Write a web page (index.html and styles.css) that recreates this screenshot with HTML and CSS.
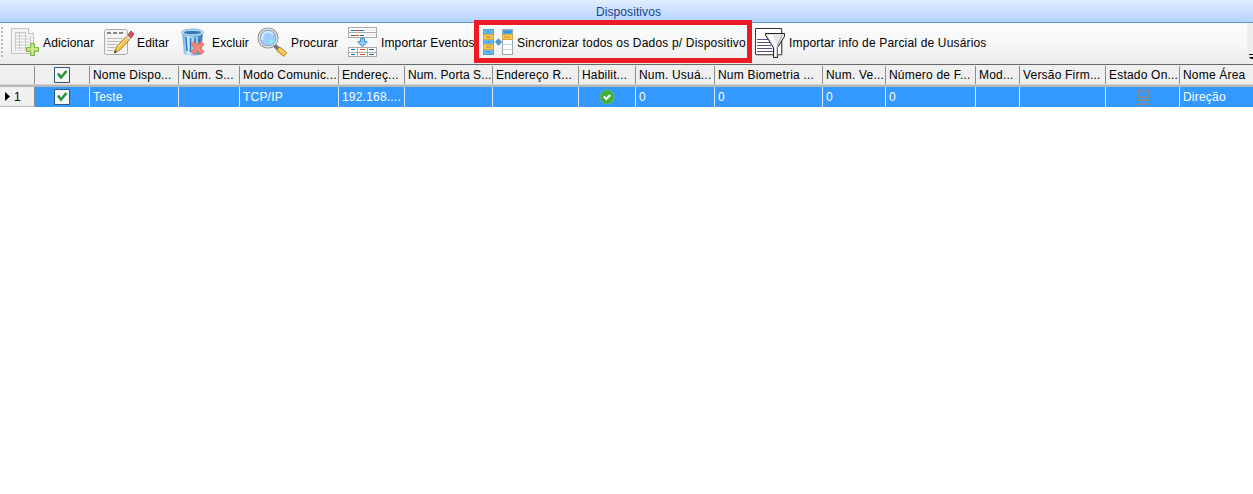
FILE: index.html
```html
<!DOCTYPE html>
<html lang="pt-BR">
<head>
<meta charset="utf-8">
<title>Dispositivos</title>
<link rel="stylesheet" href="styles.css">
</head>
<body>
<header class="title">Dispositivos</header>
<nav class="toolbar">
  <svg class="grip" width="9" height="41"><path d="M2 4v30" stroke="#bbb" stroke-width="2" stroke-dasharray="2 2"/></svg>
  <div class="tool add"><svg class="icon" viewBox="0 0 32 32">
    <path d="M2.500 1.500h17l5 5v20h-22z" fill="#f4f4f4" stroke="#c3c3c3"/><path d="M19.500 1.500v5h5" fill="#fff" stroke="#bbb"/>
    <path d="M6 5h11v4h5v15H6z" fill="#c9c9c9"/><path d="M7 7.500h3M11 7.500h5M7 10.500h3M11 10.500h5M17 10.500h4M7 13.500h3M11 13.500h5M17 13.500h4M7 16.500h3M11 16.500h5M17 16.500h4M7 19.500h3M11 19.500h5M17 19.500h4M7 22.500h3M11 22.500h5" stroke="#fafafa" stroke-width="2"/>
    <path d="M21.500 16.500h4v4h4v4h-4v4h-4v-4h-4v-4h4z" fill="#b9dd70" stroke="#83b54b"/><path d="M23.500 18v9M19 22h9" stroke="#d4ed9c"/></svg><span>Adicionar</span></div>
  <div class="tool edit"><svg class="icon" viewBox="0 0 32 32">
    <rect x="1.500" y="2.500" width="23" height="25" rx="2" fill="#f3f3f3" stroke="#aaa"/><path d="M4 6h4m2 0h4m2 0h4" stroke="#888" stroke-width="2"/><path d="M4 11.500h16M4 14.500h14M4 17.500h10M4 20.500h8M4 23.500h6" stroke="#bbb"/>
    <path d="M11 26l3-7L26 7l3 3-12 13z" fill="#f7c651" stroke="#b37b28"/><path d="M15 20L26 9" stroke="#ffe59c"/><path d="M25 8l3-4 3 3-3 4z" fill="#cf5550" stroke="#a64848"/><path d="M24 9l3 3" stroke="#ccd3dc" stroke-width="2"/><path d="M11 26l1-3 2 2z" fill="#444"/></svg><span>Editar</span></div>
  <div class="tool delete"><svg class="icon" viewBox="0 0 32 32">
    <defs><linearGradient id="bin"><stop stop-color="#5ea7e0"/><stop offset=".3" stop-color="#d4edff"/><stop offset=".6" stop-color="#7db7e8"/><stop offset="1" stop-color="#347abd"/></linearGradient></defs>
    <path d="M4 5l2 22c3 2 14 2 17 0l2-22z" fill="url(#bin)"/><path d="M8 10l1 14M12.500 11v14M17 11v14M21.500 10l-1 13" stroke="#2975b7" stroke-width="1.400"/><path d="M10.500 11v14M15 11v14M19 10v14" stroke="#cfeaff"/>
    <ellipse cx="14.500" cy="5.500" rx="11" ry="3.500" fill="#b9e0f7" stroke="#83b4d8"/><ellipse cx="14.500" cy="5.500" rx="8.500" ry="1.800" fill="#3478b4"/>
    <path d="M16 14.500l3.500 3.500 3.500-3.500 3 3-3.500 3.500 3.500 3.500-3 3-3.500-3.500-3.500 3.500-3-3 3.500-3.500-3.500-3.500z" fill="#ef8a7b" stroke="#d5665f"/></svg><span>Excluir</span></div>
  <div class="tool search"><svg class="icon" viewBox="0 0 32 32">
    <path d="M17 18l9 8" stroke="#777" stroke-width="4"/><path d="M21 21.500l7.500 6.500" stroke="#b98336" stroke-width="5.500"/><path d="M21.500 22l6.500 5.500" stroke="#ffc53e" stroke-width="3.500"/><path d="M22 21l6 5" stroke="#ffe69a"/>
    <circle cx="11" cy="11" r="9" fill="#9fccff" stroke="#858b92" stroke-width="3"/><circle cx="11" cy="11" r="8.900" fill="none" stroke="#e0e4e9" stroke-width="1.500"/><path d="M5 13c0-9 7-10 11-6" fill="none" stroke="#d1e9ff" stroke-width="2"/><circle cx="14.500" cy="14.500" r="2" fill="#7df0ff"/></svg><span>Procurar</span></div>
  <div class="tool events"><svg class="icon" viewBox="0 0 32 32" shape-rendering="crispEdges">
    <path d="M1 0h29v11H1zM1 20h29v10H1z" fill="#aaa"/><path d="M2 1h27v4H2zM2 6h27v4H2zM2 21h8v4H2zM11 21h9v4h-9zM21 21h8v4h-8zM2 26h8v3H2zM11 26h9v3h-9zM21 26h8v3h-8z" fill="#fff"/><path d="M18 2h10v2H18zM19 7h9v2h-9z" fill="#eee"/>
    <path d="M4 3h4v1H4zM13 3h4v1h-4zM4 8h3v1H4zM13 8h4v1h-4zM4 22h4v1H4zM22 22h5v1h-5zM4 27h4v1H4zM22 27h5v1h-5z" fill="#2469a8"/><path d="M8 3h5v1H8zM7 8h5v1H7zM13 22h5v1h-5zM13 27h5v1h-5z" fill="#e1441c"/>
    <path d="M13.500 11.500h4v3h2.500v1l-4.500 4-4.500-4v-1h2.500z" fill="#8fcbf6" stroke="#408bd0" shape-rendering="auto"/></svg><span>Importar Eventos</span></div>
  <div class="tool sync"><svg class="icon" viewBox="0 0 32 32">
    <path d="M0 2h11v26H0z" fill="#4c9fce"/><path d="M1 3h9v4H1zM1 13h9v4H1zM1 23h9v4H1z" fill="#62bff5"/><path d="M0 7h11v6H0zM0 17h11v6H0z" fill="#d5a245"/><path d="M1 8h9v4H1zM1 18h9v4H1z" fill="#ffc642"/>
    <path d="M3 4.500l1 1 1-1 1 1 1-1 1 1M3 9.500l1 1 1-1 1 1 1-1 1 1M3 14.500l1 1 1-1 1 1 1-1 1 1M3 19.500l1 1 1-1 1 1 1-1 1 1M3 24.500l1 1 1-1 1 1 1-1 1 1" fill="none" stroke="#356c96" stroke-width=".7"/>
    <path d="M19 2h11v26H19z" fill="#9ba6ae"/><path d="M20 3h9v4h-9z" fill="#48aef6"/><path d="M19 7h11v6H19z" fill="#d5a245"/><path d="M20 8h9v4h-9z" fill="#ffc642"/><path d="M20 13h9v4h-9zM20 18h9v4h-9zM20 23h9v4h-9z" fill="#fff"/><path d="M20 17h9v1h-9zM20 22h9v1h-9z" fill="#c3ded9"/><path d="M21 5h7" stroke="#2576c5"/><path d="M21 9.500l2 1 1-1 2 1 1-1" fill="none" stroke="#a77d24" stroke-width=".8"/>
    <path d="M15.500 11.500l3.500 3.500-3.500 3.500-3.500-3.500z" fill="#4f99d0" stroke="#7db7df"/></svg><span>Sincronizar todos os Dados p/ Dispositivo</span></div>
  <div class="tool partial"><svg class="icon" viewBox="0 0 32 32">
    <path d="M.5 1.500h26v26H.5z" fill="#fff" stroke="#333"/><path d="M1 28h26V3" fill="none" stroke="#888"/><path d="M2 12h12v1H2zM2 15h13v1H2zM2 18h14v1H2zM2 21h15v1H2zM2 24h16v1H2z" fill="#55508a"/>
    <path d="M10.500 6.500h19v3l-7 11v10h-4V21l-8-13z" fill="#e4e4e4" stroke="#222"/><path d="M13 8h5l4 12v9h-2V20z" fill="#fff"/><path d="M27 8l-5 12v9" fill="none" stroke="#aaa"/></svg><span>Importar info de Parcial de Uusários</span></div>
  <div class="overflow"><svg width="6" height="8"><path d="M2 1h4v1H2zM2 4h4v2H4z" fill="#111"/></svg></div>
</nav>
<main class="grid">
  <div class="row head">
    <div></div><div class="mark"><svg class="check" width="16" height="16" viewBox="0 0 16 16"><path d="M.5.500h15v15H.5z" fill="#f5f7f6" stroke="#30577d"/><path d="M4 6.500l3 4 5.500-6.500" fill="none" stroke="#27923a" stroke-width="2.600"/></svg></div>
    <div>Nome Dispo...</div><div>Núm. S...</div><div>Modo Comunic...</div><div>Endereç...</div><div class="tight">Num. Porta S...</div><div>Endereço R...</div><div>Habilit...</div><div>Num. Usuá...</div><div>Num Biometria ...</div><div>Num. Ve...</div><div>Número de F...</div><div>Mod...</div><div>Versão Firm...</div><div>Estado On...</div><div>Nome Área</div>
  </div>
  <div class="row data">
    <div class="index"><svg width="6" height="10"><path d="M0 0l5 4.500L0 9z"/></svg><span>1</span></div><div class="mark"><svg class="check" width="16" height="16" viewBox="0 0 16 16"><path d="M.5.500h15v15H.5z" fill="#f5f7f6" stroke="#30577d"/><path d="M4 6.500l3 4 5.500-6.500" fill="none" stroke="#27923a" stroke-width="2.600"/></svg></div>
    <div>Teste</div><div></div><div>TCP/IP</div><div>192.168....</div><div></div><div></div>
    <div class="mark"><svg width="16" height="16"><circle cx="8" cy="8" r="7.200" fill="#45ae3a" stroke="#75c4a0" stroke-width=".6"/><path d="M4.800 7.500l2.500 2.500 4-4" fill="none" stroke="#fff" stroke-width="2.200"/></svg></div>
    <div>0</div><div>0</div><div>0</div><div>0</div><div></div><div></div>
    <div class="mark"><svg width="16" height="16"><path d="M3 1h11v8H3zM4.500 2.500v5h8v-5z" fill="#858b92" fill-rule="evenodd"/><path d="M3 10h11v2H3zM8 12h1v2h4v2H4v-2h4zM1 15h14v1H1z" fill="#858b92"/></svg></div><div>Direção</div>
  </div>
</main>
</body>
</html>
```
FILE: styles.css
```css
* { box-sizing: border-box; }
body { margin: 0; height: 494px; overflow: hidden; background: #fff; color: #000; font: 12px "Liberation Sans", Arial, sans-serif; }
svg { display: block; flex: none; }
.title { height: 23px; padding-left: 4px; line-height: 24px; text-align: center; color: #15428b; letter-spacing: .1px; background: linear-gradient(#e2edff, #b4d3ff); border-bottom: 1px solid #6593cf; }
.toolbar { display: flex; height: 42px; background: linear-gradient(#fcfcfc, #f7f7f7 50%, #ebebeb); border-bottom: 1px solid #686868; }
.grip { width: 9px; }
.tool { display: flex; flex: none; height: 41px; padding-top: 4px; white-space: nowrap; letter-spacing: .14px; }
.icon { width: 32px; height: 32px; margin-right: 2px; }
.tool span { line-height: 32px; }
.add { width: 94px; }
.edit { width: 75px; }
.delete { width: 79px; }
.search { width: 90px; }
.events { width: 127px; }
.sync { width: 278px; height: 43px; margin-top: -3px; padding: 2px 0 0 4px; border: 5px solid #ed1c24; letter-spacing: .18px; z-index: 1; }
.partial { margin-left: 3px; letter-spacing: .17px; }
.overflow { width: 6px; margin-left: auto; padding-top: 30px; background: #eee; }
.row { display: grid; grid-template-columns: 35px 55px 89px 61px 99px 66px 88px 86px 57px 79px 108px 63px 90px 44px 86px 74px 1fr; }
.row > div { overflow: hidden; padding-left: 3px; white-space: nowrap; letter-spacing: .2px; }
.row > .tight { letter-spacing: .1px; }
.row > .mark { display: flex; align-items: center; justify-content: center; padding: 0; }
.head { height: 22px; background: linear-gradient(#efefef 0 19px, #d5d5d5 19px 20px, #b6b6b6 20px); }
.head > div { height: 18px; margin-top: 1px; line-height: 18px; border-right: 1px solid #8d8d8d; }
.head > div:last-child { border-right: 0; }
.data { height: 20px; color: #fff; background: #3399ff; }
.data > div { line-height: 20px; border-right: 1px solid #d8eaff; }
.data > div:last-child { border-right: 0; }
.data > .index { display: flex; align-items: center; gap: 3px; padding-left: 5px; color: #000; background: #f0f0f0; border-right: 1px solid #8d8d8d; border-bottom: 1px solid #bbb; }
```
